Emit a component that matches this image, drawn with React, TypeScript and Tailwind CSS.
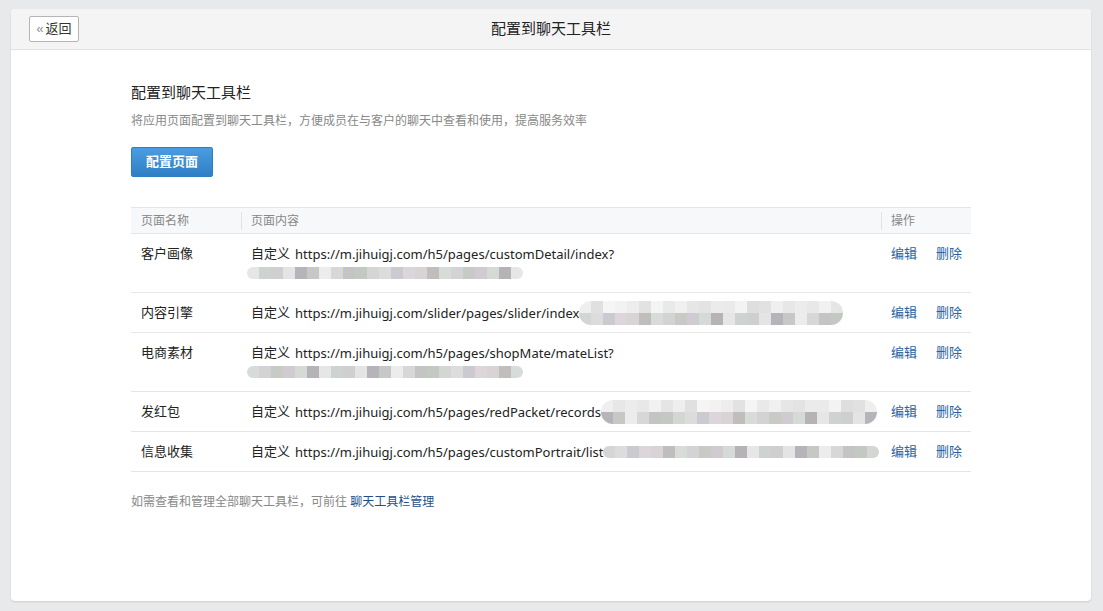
import React from 'react';

const FONT = { fontFamily: '"Liberation Sans", "Noto Sans CJK SC", sans-serif' };
const URL_FONT = { fontFamily: '"Noto Sans", "Noto Sans CJK SC", sans-serif' };

// pixelated "mosaic" blocks standing in for the redacted part of each URL
const Mosaic: React.FC<{ cells: string[]; lower?: string[]; className?: string }> = ({ cells, lower, className }) => (
  <span className={`inline-flex flex-col align-middle rounded-full overflow-hidden ${className ?? ''}`}>
    <span className="flex">
      {cells.map((c, i) => (
        <span key={i} className="w-[12px] h-[12px]" style={{ background: c }} />
      ))}
    </span>
    {lower && (
      <span className="flex">
        {lower.map((c, i) => (
          <span key={i} className="w-[12px] h-[12px]" style={{ background: c }} />
        ))}
      </span>
    )}
  </span>
);

const G = ['#e6e6e6', '#cfcbd0', '#d8dcd8', '#dcd6da', '#d3d6d3', '#d7d7d7', '#b6b4b8', '#cfd3cf', '#d6dad6', '#d3d3d5', '#d9d3d6', '#dcdcdc', '#c4c4c4', '#c6c8c5', '#cfcfcf', '#b5b3b5', '#c8cac6', '#c0bdbd', '#cacad0', '#c3c9c2', '#ececec', '#e4e4e4'];
const L = ['#f2f2f2', '#eeeeee', '#e8e8e8', '#efefef', '#f3f3f3', '#e3e3e3', '#e9e9e9', '#ededed', '#e0e0e0', '#f1f1f1', '#e7e7e7', '#dedede', '#ebebeb', '#f0f0f0', '#e2e2e2', '#f5f5f5', '#e5e5e5', '#ececec', '#e1e1e1', '#eaeaea', '#e6e6e6', '#f4f4f4'];

type Row = { name: string; url: string; wrap: boolean; mosaic: number };

const ROWS: Row[] = [
  { name: '客户画像', url: 'https://m.jihuigj.com/h5/pages/customDetail/index?', wrap: true, mosaic: 23 },
  { name: '内容引擎', url: 'https://m.jihuigj.com/slider/pages/slider/index', wrap: false, mosaic: 22 },
  { name: '电商素材', url: 'https://m.jihuigj.com/h5/pages/shopMate/mateList?', wrap: true, mosaic: 23 },
  { name: '发红包', url: 'https://m.jihuigj.com/h5/pages/redPacket/records', wrap: false, mosaic: 23 },
  { name: '信息收集', url: 'https://m.jihuigj.com/h5/pages/customPortrait/list', wrap: false, mosaic: 23 },
];

const pick = (arr: string[], n: number, off: number) => Array.from({ length: n }, (_, i) => arr[(i * 7 + off) % arr.length]);

const App: React.FC = () => {
  return (
    <div className="min-h-[611px] bg-[#e8e9eb] pt-[9px] pl-[11px] pr-[12px] pb-[10px]" style={FONT}>
      <div className="bg-white rounded-[4px] shadow-[0_1px_2px_rgba(0,0,0,0.12)] min-h-[592px] overflow-hidden">
        {/* header */}
        <div className="relative h-[41px] bg-[#f4f4f4] border-b border-[#e2e2e2] flex items-center justify-center">
          <button className="absolute left-[18px] top-[7px] h-[26px] w-[50px] flex items-center justify-center gap-[3px] border border-[#b5b5b5] rounded-[2px] bg-white text-[13px] text-[#333]">
            <span className="text-[#888] text-[12px] tracking-[-1px]">‹‹</span>返回
          </button>
          <span className="text-[15px] text-[#222]">配置到聊天工具栏</span>
        </div>

        {/* body */}
        <div className="pl-[120px] pr-[120px] pt-[32px]">
          <h2 className="text-[15px] text-[#222] leading-[22px]">配置到聊天工具栏</h2>
          <p className="mt-[8px] text-[12px] text-[#888] leading-[18px]">
            将应用页面配置到聊天工具栏，方便成员在与客户的聊天中查看和使用，提高服务效率
          </p>
          <button className="mt-[17px] w-[82px] h-[30px] rounded-[2px] bg-gradient-to-b from-[#4a9de0] to-[#2f7fc4] border border-[#2f7ec2] text-white text-[13px] font-bold">
            配置页面
          </button>

          <table className="mt-[30px] w-[840px] border-collapse text-[13px] text-[#222]">
            <thead>
              <tr className="bg-[#f7f8fa] border-t border-b border-[#e5e6e8] text-[12px] text-[#888]">
                <th className="w-[110px] h-[26px] font-normal text-left pl-[10px]">页面名称</th>
                <th className="font-normal text-left pl-[10px] relative">
                  <span className="absolute left-0 top-[4px] h-[18px] border-l border-[#e2e2e2]" />
                  页面内容
                </th>
                <th className="w-[90px] font-normal text-left pl-[10px] relative">
                  <span className="absolute left-0 top-[4px] h-[18px] border-l border-[#e2e2e2]" />
                  操作
                </th>
              </tr>
            </thead>
            <tbody>
              {ROWS.map((r, idx) => (
                <tr key={r.name} className="border-b border-[#e5e6e8] align-top">
                  <td className="pl-[10px] pt-[11px] pb-[10px] leading-[18px]">{r.name}</td>
                  <td className="pl-[10px] pt-[11px] pb-[10px] leading-[18px]">
                    {r.wrap ? (
                      <>
                        <div className="flex items-center h-[18px] whitespace-nowrap">
                          <span>自定义</span>
                          <span className="ml-[5px]" style={URL_FONT}>{r.url}</span>
                        </div>
                        <div className="flex items-center h-[18px] mt-[1px]">
                          <Mosaic className="-ml-[4px]" cells={pick(G, r.mosaic, idx)} />
                        </div>
                      </>
                    ) : (
                      <div className="flex items-center h-[18px] whitespace-nowrap">
                        <span>自定义</span>
                        <span className="ml-[5px]" style={URL_FONT}>{r.url}</span>
                        <Mosaic
                          className="-my-[6px]"
                          cells={pick(idx === 4 ? G : L, r.mosaic, idx)}
                          lower={idx === 4 ? undefined : pick(G, r.mosaic, idx + 3)}
                        />
                      </div>
                    )}
                  </td>
                  <td className="pl-[10px] pt-[11px] pb-[10px] leading-[18px] whitespace-nowrap text-[#2a62a0]">
                    <span className="mr-[19px]">编辑</span>
                    <span>删除</span>
                  </td>
                </tr>
              ))}
            </tbody>
          </table>

          <p className="mt-[21px] text-[12px] text-[#888]">
            如需查看和管理全部聊天工具栏，可前往 <span className="text-[#1f4f88]">聊天工具栏管理</span>
          </p>
        </div>
      </div>
    </div>
  );
};

export default App;
